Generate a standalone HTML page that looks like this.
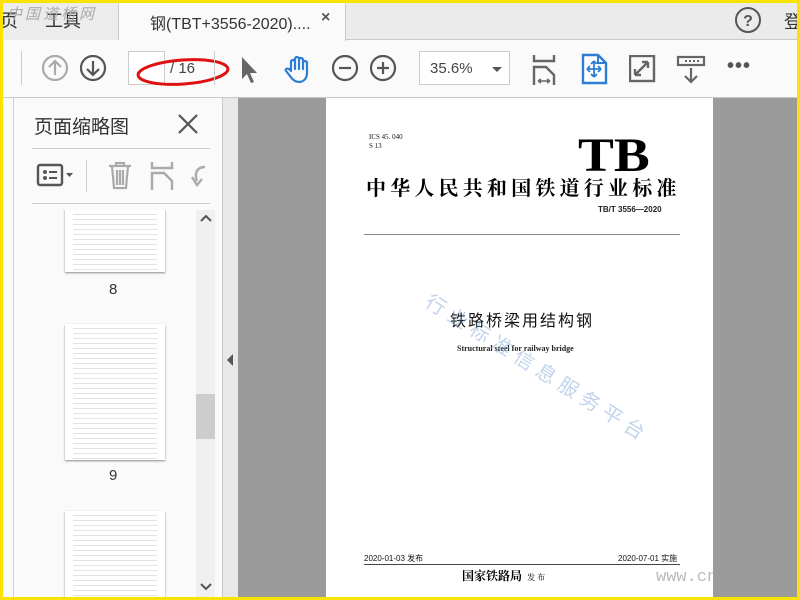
<!DOCTYPE html>
<html><head><meta charset="utf-8"><style>
*{margin:0;padding:0;box-sizing:border-box}
body{width:800px;height:600px;overflow:hidden;background:#fbe300;position:relative;font-family:"Liberation Sans","Noto Sans CJK SC",sans-serif}
.abs{position:absolute}
#app{position:absolute;left:3px;top:3px;width:794px;height:594px;background:#fafafa;overflow:hidden}
.thumb{position:absolute;left:62px;width:100px;background:#fff;box-shadow:0 1px 2px rgba(0,0,0,.45);
background-image:repeating-linear-gradient(to bottom,transparent 0 4px,#e2e2e2 4px 5px);background-size:84px 100%;background-repeat:no-repeat;background-position:8px 0}
</style></head><body>
<div id="app">
<div class="abs" style="left:0;top:0;width:794px;height:37px;background:#ebebeb;border-bottom:1px solid #c8c8c8"></div>
<div class="abs" style="left:0;top:0;width:116px;height:37px;background:#ececec;border-right:1px solid #c8c8c8"></div>
<div class="abs" style="left:-3px;top:4px;font-size:18px;color:#333">页</div>
<div class="abs" style="left:42px;top:4px;font-size:18px;color:#333">工具</div>
<div class="abs" style="left:4px;top:0;font-size:15px;color:#aaa;letter-spacing:3px;font-style:italic">中国道桥网</div>
<div class="abs" style="left:116px;top:0;width:227px;height:38px;background:#fafafa;border-right:1px solid #c8c8c8"></div>
<div class="abs" style="left:147px;top:7px;font-size:16px;color:#333">钢(TBT+3556-2020)....</div>
<div class="abs" style="left:318px;top:6px;font-size:16px;color:#555;font-weight:bold">×</div>
<svg class="abs" style="left:731px;top:3px" width="28" height="28"><circle cx="14" cy="14" r="12" fill="none" stroke="#555" stroke-width="2"/><text x="14" y="20" text-anchor="middle" font-size="16" font-weight="bold" fill="#555" font-family="Liberation Sans">?</text></svg>
<div class="abs" style="left:781px;top:5px;font-size:18px;color:#333">登</div>
<div class="abs" style="left:0;top:94px;width:794px;height:1px;background:#c8c8c8"></div>
<div class="abs" style="left:18px;top:48px;width:1px;height:34px;background:#ccc"></div>
<svg class="abs" style="left:39px;top:52px" width="28" height="28"><circle cx="13" cy="13" r="12" fill="none" stroke="#aaa" stroke-width="2.2"/><path d="M13 20V7M7 12l6-6 6 6" fill="none" stroke="#aaa" stroke-width="2.2"/></svg>
<svg class="abs" style="left:77px;top:52px" width="28" height="28"><circle cx="13" cy="13" r="12" fill="none" stroke="#555" stroke-width="2.2"/><path d="M13 6v13M7 14l6 6 6-6" fill="none" stroke="#555" stroke-width="2.2"/></svg>
<div class="abs" style="left:125px;top:48px;width:37px;height:34px;border:1px solid #ccc;background:#fff"></div>
<div class="abs" style="left:167px;top:57px;font-size:15px;color:#444">/ 16</div>
<svg class="abs" style="left:130px;top:52px" width="100" height="34"><ellipse cx="50" cy="17" rx="45" ry="12" transform="rotate(-4 50 17)" fill="none" stroke="#e01010" stroke-width="3"/></svg>
<div class="abs" style="left:211px;top:48px;width:1px;height:34px;background:#ccc"></div>
<svg class="abs" style="left:236px;top:52px" width="22" height="30"><path d="M3 2v22l5-5 4 9 3-1-4-9h7z" fill="#666"/></svg>
<svg class="abs" style="left:281px;top:52px" width="30" height="30"><path d="M7 16V7a2 2 0 014 0v7V4a2 2 0 014 0v10V5a2 2 0 014 0v9V8a2 2 0 014 0v10c0 6-4 9-8 9s-7-3-9-6l-4-5c-1-2 1-3 3-2z" fill="none" stroke="#2d7dd2" stroke-width="2.2" stroke-linejoin="round"/></svg>
<svg class="abs" style="left:329px;top:52px" width="28" height="28"><circle cx="13" cy="13" r="12" fill="none" stroke="#555" stroke-width="2.2"/><path d="M7 13h12" stroke="#555" stroke-width="2.2"/></svg>
<svg class="abs" style="left:367px;top:52px" width="28" height="28"><circle cx="13" cy="13" r="12" fill="none" stroke="#555" stroke-width="2.2"/><path d="M7 13h12M13 7v12" stroke="#555" stroke-width="2.2"/></svg>
<div class="abs" style="left:416px;top:48px;width:91px;height:34px;border:1px solid #ccc;background:#fff"></div>
<div class="abs" style="left:427px;top:57px;font-size:15px;color:#444">35.6%</div>
<div class="abs" style="left:489px;top:64px;border:5px solid transparent;border-top:5px solid #555"></div>
<svg class="abs" style="left:529px;top:50px" width="26" height="34"><path d="M2 2v6h20V2M2 32V14h12l8 8v10" fill="none" stroke="#666" stroke-width="2.4"/><path d="M6 28h12M6 28l3-2M6 28l3 2M18 28l-3-2M18 28l-3 2" stroke="#666" stroke-width="1.5"/></svg>
<svg class="abs" style="left:578px;top:50px" width="28" height="32"><path d="M2 2h15l8 8v20H2z" fill="#fff" stroke="#2d7dd2" stroke-width="2.4"/><path d="M17 2v8h8" fill="none" stroke="#2d7dd2" stroke-width="2"/><path d="M13 8v16M6 16h14M13 8l-3 3M13 8l3 3M13 24l-3-3M13 24l3-3M6 16l3-3M6 16l3 3M20 16l-3-3M20 16l-3 3" stroke="#2d7dd2" stroke-width="1.8" fill="none"/></svg>
<svg class="abs" style="left:626px;top:52px" width="28" height="28"><rect x="1" y="1" width="24" height="25" fill="none" stroke="#666" stroke-width="2.4"/><path d="M6 20l13-13M19 7h-6M19 7v6M6 20h6M6 20v-6" stroke="#666" stroke-width="2.4" fill="none"/></svg>
<svg class="abs" style="left:673px;top:52px" width="30" height="30"><rect x="2" y="2" width="26" height="8" fill="none" stroke="#666" stroke-width="2.2"/><path d="M9 6h2M13 6h2M17 6h2M21 6h2" stroke="#666" stroke-width="2"/><path d="M15 13v14M9 21l6 6 6-6" fill="none" stroke="#666" stroke-width="2.2"/></svg>
<div class="abs" style="left:724px;top:52px;font-size:20px;color:#555;font-weight:bold;letter-spacing:1px">•••</div>
<div class="abs" style="left:10px;top:95px;width:1px;height:500px;background:#d0d0d0"></div>
<div class="abs" style="left:31px;top:109px;font-size:19px;color:#333">页面缩略图</div>
<svg class="abs" style="left:174px;top:110px" width="22" height="22"><path d="M2 2l18 18M20 2L2 20" stroke="#555" stroke-width="2.2"/></svg>
<div class="abs" style="left:29px;top:145px;width:178px;height:1px;background:#ccc"></div>
<div class="abs" style="left:29px;top:200px;width:178px;height:1px;background:#ccc"></div>
<svg class="abs" style="left:33px;top:160px" width="40" height="26"><rect x="2" y="2" width="24" height="20" rx="2" fill="none" stroke="#555" stroke-width="2.4"/><circle cx="9" cy="9" r="2" fill="#555"/><circle cx="9" cy="15" r="2" fill="#555"/><path d="M13 9h8M13 15h8" stroke="#555" stroke-width="2"/><path d="M30 10h7l-3.5 4z" fill="#555"/></svg>
<div class="abs" style="left:83px;top:157px;width:1px;height:32px;background:#ccc"></div>
<svg class="abs" style="left:104px;top:157px" width="28" height="32"><path d="M2 6h22M9 6V3h8v3M5 6l2 22h12l2-22M10 10v15M13 10v15M16 10v15" fill="none" stroke="#aaa" stroke-width="2.2"/></svg>
<svg class="abs" style="left:147px;top:158px" width="24" height="30"><path d="M2 1v6h20V1M2 29V12h12l8 8v9" fill="none" stroke="#aaa" stroke-width="2.4"/></svg>
<svg class="abs" style="left:188px;top:160px" width="16" height="28"><path d="M14 4c-8 0-11 6-8 14" fill="none" stroke="#aaa" stroke-width="2.4"/><path d="M1 14l5 8 5-6" fill="none" stroke="#aaa" stroke-width="2.4"/></svg>
<div style="position:absolute;left:0;top:207px;width:193px;height:387px;overflow:hidden">
<div class="thumb" style="top:-10px;height:72px"></div>
<div class="thumb" style="top:114px;height:136px"></div>
<div class="thumb" style="top:301px;height:100px"></div>
</div>
<div class="abs" style="left:106px;top:278px;font-size:15px;color:#333">8</div>
<div class="abs" style="left:106px;top:464px;font-size:15px;color:#333">9</div>
<div class="abs" style="left:193px;top:207px;width:19px;height:387px;background:#f0f0f0"></div>
<div class="abs" style="left:193px;top:391px;width:19px;height:45px;background:#cdcdcd"></div>
<svg class="abs" style="left:196px;top:210px" width="14" height="12"><path d="M2 8l5-5 5 5" fill="none" stroke="#555" stroke-width="2"/></svg>
<svg class="abs" style="left:196px;top:578px" width="14" height="12"><path d="M2 3l5 5 5-5" fill="none" stroke="#555" stroke-width="2"/></svg>
<div class="abs" style="left:219px;top:95px;width:1px;height:499px;background:#c8c8c8"></div>
<div class="abs" style="left:220px;top:95px;width:15px;height:499px;background:#e8e8e8"></div>
<div class="abs" style="left:224px;top:351px;border-style:solid;border-color:transparent #555 transparent transparent;border-width:6px 6px 6px 0;width:0;height:0"></div>
<div class="abs" style="left:235px;top:95px;width:559px;height:499px;background:#9b9b9b"></div>
<div class="abs" style="left:323px;top:95px;width:387px;height:499px;background:#fff;overflow:hidden">
<div class="abs" style="left:43px;top:35px;font-size:7px;font-family:'Liberation Serif',serif;line-height:9px;color:#111">ICS 45. 040<br>S 13</div>
<div class="abs" style="left:252px;top:36px;font-size:48px;font-weight:bold;font-family:'Liberation Serif',serif;color:#000;line-height:44px;transform:scaleX(1.12);transform-origin:0 0">TB</div>
<div class="abs" style="left:40px;top:76px;font-size:20px;font-weight:bold;font-family:'Noto Serif CJK SC',serif;color:#000;letter-spacing:4.2px;white-space:nowrap;line-height:26px">中华人民共和国铁道行业标准</div>
<div class="abs" style="left:272px;top:107px;font-size:8px;font-weight:bold;color:#222;white-space:nowrap">TB/T 3556—2020</div>
<div class="abs" style="left:38px;top:136px;width:316px;height:1px;background:#888"></div>
<div class="abs" style="left:124px;top:209px;font-size:16px;color:#111;letter-spacing:2px;white-space:nowrap">铁路桥梁用结构钢</div>
<div class="abs" style="left:131px;top:246px;font-size:8px;font-weight:bold;font-family:'Liberation Serif',serif;color:#222;white-space:nowrap">Structural steel for railway bridge</div>
<div class="abs" style="left:110px;top:188px;font-size:20px;color:rgba(120,160,210,.45);letter-spacing:6px;transform:rotate(32deg);transform-origin:0 0;white-space:nowrap">行业标准信息服务平台</div>
<div class="abs" style="left:38px;top:455px;font-size:8px;color:#111;white-space:nowrap">2020-01-03 发布</div>
<div class="abs" style="left:292px;top:455px;font-size:8px;color:#111;white-space:nowrap">2020-07-01 实施</div>
<div class="abs" style="left:38px;top:466px;width:316px;height:1px;background:#444"></div>
<div class="abs" style="left:136px;top:469px;font-size:12px;font-weight:bold;font-family:'Noto Serif CJK SC',serif;color:#000;white-space:nowrap">国家铁路局 <span style="font-size:8px;font-weight:normal">&nbsp;发 布</span></div>
<div class="abs" style="left:330px;top:470px;font-size:17px;color:#bbb;font-family:'Liberation Mono',monospace;white-space:nowrap">www.cn</div>
</div>
</div>
</body></html>
